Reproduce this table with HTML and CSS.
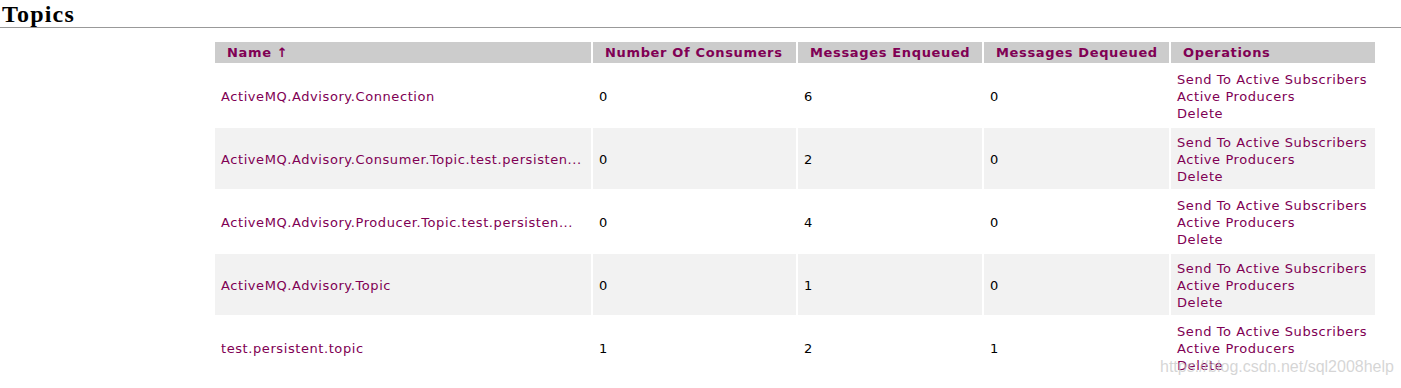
FILE: index.html
```html
<!DOCTYPE html>
<html>
<head>
<meta charset="utf-8">
<link rel="stylesheet" href="styles.css">
</head>
<body>
<h2 class="title">Topics</h2>
<table class="topics">
  <colgroup>
    <col class="c-name"><col class="c-cons"><col class="c-enq"><col class="c-deq"><col class="c-ops">
  </colgroup>
  <thead>
    <tr>
      <th>Name ↑</th>
      <th>Number Of Consumers</th>
      <th>Messages Enqueued</th>
      <th>Messages Dequeued</th>
      <th>Operations</th>
    </tr>
  </thead>
  <tbody>
    <tr>
      <td><a href="#">ActiveMQ.Advisory.Connection</a></td>
      <td>0</td><td>6</td><td>0</td>
      <td class="ops"><a href="#">Send To Active Subscribers</a><a href="#">Active Producers</a><a href="#">Delete</a></td>
    </tr>
    <tr class="alt">
      <td><a href="#">ActiveMQ.Advisory.Consumer.Topic.test.persisten...</a></td>
      <td>0</td><td>2</td><td>0</td>
      <td class="ops"><a href="#">Send To Active Subscribers</a><a href="#">Active Producers</a><a href="#">Delete</a></td>
    </tr>
    <tr>
      <td><a href="#">ActiveMQ.Advisory.Producer.Topic.test.persisten...</a></td>
      <td>0</td><td>4</td><td>0</td>
      <td class="ops"><a href="#">Send To Active Subscribers</a><a href="#">Active Producers</a><a href="#">Delete</a></td>
    </tr>
    <tr class="alt">
      <td><a href="#">ActiveMQ.Advisory.Topic</a></td>
      <td>0</td><td>1</td><td>0</td>
      <td class="ops"><a href="#">Send To Active Subscribers</a><a href="#">Active Producers</a><a href="#">Delete</a></td>
    </tr>
    <tr>
      <td><a href="#">test.persistent.topic</a></td>
      <td>1</td><td>2</td><td>1</td>
      <td class="ops"><a href="#">Send To Active Subscribers</a><a href="#">Active Producers</a><a href="#">Delete</a></td>
    </tr>
  </tbody>
</table>
<div class="watermark">https://blog.csdn.net/sql2008help</div>
</body>
</html>
```
FILE: styles.css
```css
html, body {
  margin: 0;
  padding: 0;
  background: #fff;
}
body {
  font-family: "DejaVu Sans", Verdana, sans-serif;
  font-size: 13px;
  color: #000;
  position: relative;
  height: 388px;
  overflow: hidden;
}
.title {
  font-family: "Liberation Serif", "Times New Roman", serif;
  font-weight: bold;
  font-size: 24px;
  line-height: 28px;
  letter-spacing: 1.2px;
  margin: 0;
  padding: 0 0 0 2px;
  border-bottom: 1px solid #999;
  height: 27px;
}
.topics {
  margin: 12px 0 0 213px;
  border-collapse: separate;
  border-spacing: 2px;
  table-layout: fixed;
  width: 1164px;
}
.c-name { width: 376px; }
.c-cons { width: 203px; }
.c-enq { width: 184px; }
.c-deq { width: 185px; }
.c-ops { width: 204px; }
.topics th {
  background: #ccc;
  color: #800054;
  font-weight: bold;
  text-align: left;
  padding: 1px 0 0 12px;
  height: 20px;
  line-height: 20px;
  letter-spacing: 0.65px;
  white-space: nowrap;
}
.topics td {
  padding: 6px 6px 4px;
  height: 51px;
  line-height: 17px;
  letter-spacing: 0.58px;
  vertical-align: middle;
  white-space: nowrap;
  overflow: hidden;
}
.topics tr.alt td {
  background: #f2f2f2;
}
.topics a {
  color: #800054;
  text-decoration: none;
}
.ops a {
  display: block;
}
.watermark {
  position: absolute;
  left: 1160px;
  top: 358px;
  font-family: "Liberation Sans", Arial, sans-serif;
  font-size: 16px;
  color: rgba(200, 200, 200, 0.75);
  white-space: nowrap;
}
```
